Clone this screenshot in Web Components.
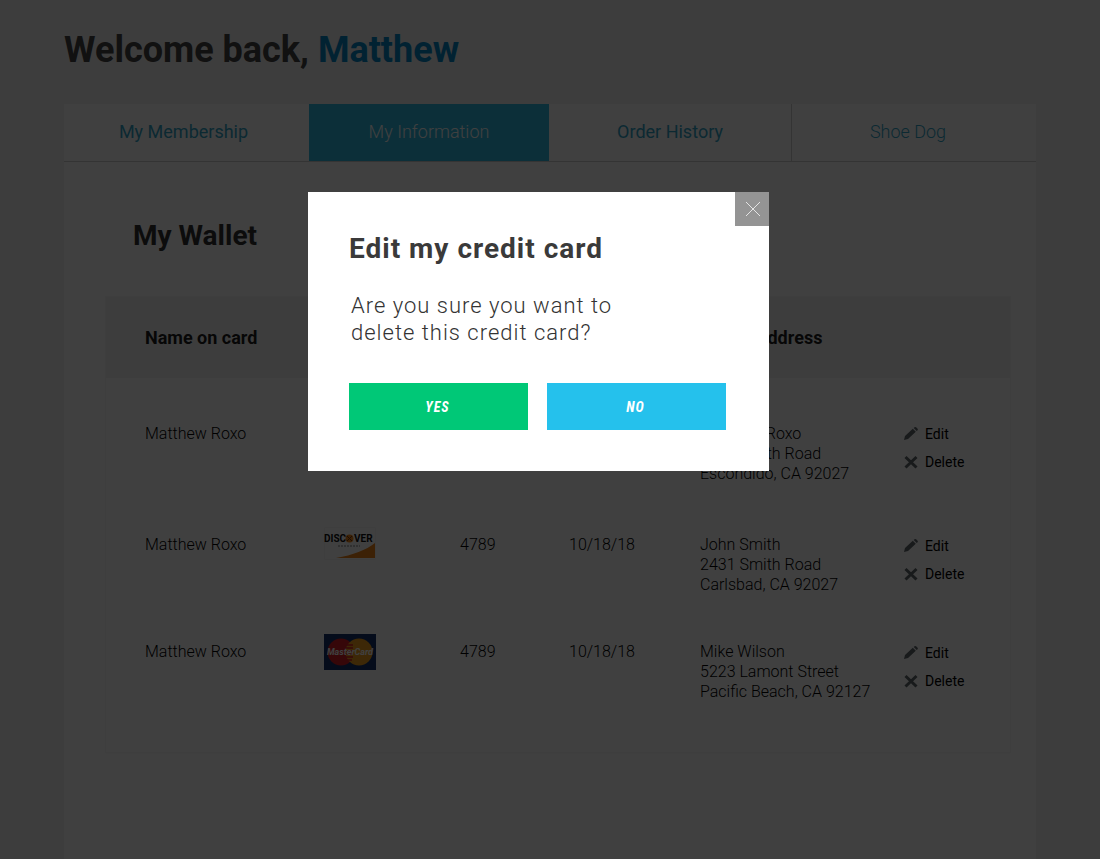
<!DOCTYPE html>
<html lang="en">
<head>
<meta charset="utf-8">
<meta name="viewport" content="width=device-width, initial-scale=1">
<title>My Wallet</title>
<style>
  body { margin: 0; background: #f3f3f3; color: #333; font-family: Roboto, "Liberation Sans", sans-serif; }
</style>
</head>
<body>
<account-page name="Matthew">
  <account-tabs slot="nav"></account-tabs>
  <wallet-panel></wallet-panel>
</account-page>
<confirm-dialog heading="Edit my credit card">Are you sure you want to delete this credit card?</confirm-dialog>

<script>
function define(name, html, setup) {
  const template = document.createElement('template');
  template.innerHTML = html;
  customElements.define(name, class extends HTMLElement {
    constructor() {
      super();
      this.attachShadow({ mode: 'open' }).append(template.content.cloneNode(true));
    }
    connectedCallback() { if (setup) setup(this, this.shadowRoot); }
  });
}

define('account-page', `
  <style>
    :host { display: flex; flex-direction: column; box-sizing: border-box; min-height: 100vh; padding: 0 64px; }
    h1 { margin: 0; padding: 28px 0 32px; font-size: 36px; line-height: 44px; font-weight: 700; color: #444; }
    span { color: #0588c8; }
    main { flex: 1; background: #fff; }
  </style>
  <h1>Welcome back, <span></span></h1>
  <slot name="nav"></slot>
  <main><slot></slot></main>
`, (host, root) => { root.querySelector('span').textContent = host.getAttribute('name'); });

define('account-tabs', `
  <style>
    :host { display: block; background: #fff; }
    nav { display: grid; grid-template-columns: 245fr 240fr 242fr 245fr; border-bottom: 1px solid #d0d0d0; }
    a { display: block; box-sizing: border-box; height: 57px; font-size: 18px; line-height: 56px; text-align: center; text-decoration: none; color: #30a5c8; }
    a:first-child { padding-right: 6px; }
    a:last-child { padding-right: 12px; border-left: 1px solid #d0d0d0; font-weight: 300; }
    a[aria-current] { background: #30bce4; color: #fff; font-weight: 300; }
  </style>
  <nav aria-label="Account">
    <a href="#membership">My Membership</a>
    <a href="#information" aria-current="page">My Information</a>
    <a href="#orders">Order History</a>
    <a href="#shoe-dog">Shoe Dog</a>
  </nav>
`);

define('wallet-icon', `
  <style>
    :host { display: block; width: 14px; height: 14px; }
    svg { display: block; }
  </style>
  <svg width="14" height="14" viewBox="0 0 14 14" fill="none" aria-hidden="true"></svg>
`, (host, root) => {
  const shapes = {
    edit: '<path fill="#60686c" d="M0 13l1-4 7.800-7.300 3 3L4 12zM9.700 1l.8-.7q.8-.6 1.600 0l1.500 1.400q.6.8 0 1.500l-.9.9z"/>',
    remove: '<path stroke="#60686c" stroke-width="3" d="M1.500 2l11 10.500M12.500 2l-11 10.500"/>'
  };
  root.querySelector('svg').innerHTML = shapes[host.getAttribute('shape')];
});

define('row-actions', `
  <style>
    :host { display: block; }
    a { display: flex; align-items: center; gap: 7px; height: 28px; font-size: 14px; font-weight: 400; color: #000; text-decoration: none; }
  </style>
  <a href="#edit"><wallet-icon shape="edit"></wallet-icon>Edit</a>
  <a href="#delete"><wallet-icon shape="remove"></wallet-icon>Delete</a>
`);

define('card-logo', `
  <style>
    :host { display: block; }
    svg { display: block; }
  </style>
  <svg width="52" height="36" viewBox="0 0 52 36" role="img"></svg>
`, (host, root) => {
  const art = {
    Discover: `
      <path fill="#fff" stroke="#f6f6f6" d="M.5.5h51v32H.5z"/>
      <path fill="#f08418" d="M12 31C29 28 42 23 51 16v15z"/>
      <text x="0" y="15" font-size="10" font-weight="700" fill="#111">DISC</text>
      <circle cx="25.500" cy="11.500" r="4" fill="#f08418"/>
      <path stroke="#7a3a10" d="M23 9l5 5M28 9l-5 5"/>
      <text x="30" y="15" font-size="10" font-weight="700" fill="#111">VER</text>
      <path stroke="#aaa" stroke-width="1.500" stroke-dasharray="2 1" d="M14 19h22"/>`,
    MasterCard: `
      <path fill="#15316b" d="M0 0h52v36H0z"/>
      <circle cx="17" cy="18" r="13.500" fill="#d81e24"/>
      <circle cx="35" cy="18" r="13.500" fill="#f3a11d"/>
      <path stroke="#d81e24" stroke-width="1.500" d="M22 11h7M21 14h8M21 17h8M21 20h8M22 23h7M23 26h5"/>
      <text x="26" y="21" font-size="9" font-style="italic" font-weight="700" fill="#fff" text-anchor="middle">MasterCard</text>`
  };
  const brand = host.getAttribute('brand');
  const svg = root.querySelector('svg');
  svg.setAttribute('aria-label', brand);
  svg.innerHTML = art[brand];
});

define('wallet-panel', `
  <style>
    :host { display: block; padding: 56px 26px 40px 42px; }
    h2 { margin: 0; padding: 0 27px 43px; font-size: 28px; line-height: 36px; font-weight: 700; color: #333; }
    table { width: 100%; table-layout: fixed; border-collapse: separate; border-spacing: 0; box-shadow: 0 0 0 1px #f8f8f8, 0 1px 2px #eee; font-size: 16px; line-height: 20px; font-weight: 300; color: #000; }
    .name { width: 218px; } .card { width: 136px; } .number { width: 109px; } .expires { width: 131px; } .address { width: 204px; }
    th, td { padding: 0; text-align: left; vertical-align: top; }
    th { height: 81px; background: #f4f4f4; font-size: 18px; font-weight: 700; vertical-align: middle; color: #1c1c1c; }
    td { height: 61px; padding-top: 46px; }
    tr > :first-child { padding-left: 39px; }
    tbody tr:first-child td { height: 65px; }
    tbody tr:last-child td { height: 66px; padding-bottom: 44px; }
    tbody td.act { padding-top: 43px; }
    tbody tr:first-child td.act { padding-top: 42px; }
    tbody td.logo { padding-top: 38px; }
  </style>
  <h2>My Wallet</h2>
  <table>
    <colgroup><col class="name"><col class="card"><col class="number"><col class="expires"><col class="address"><col></colgroup>
    <thead>
      <tr><th scope="col">Name on card</th><th></th><th></th><th></th><th scope="col">Billing Address</th><th></th></tr>
    </thead>
    <tbody>
      <tr><td>Matthew Roxo</td><td></td><td></td><td></td><td>Matthew Roxo<br>2431 Smith Road<br>Escondido, CA 92027</td><td class="act"><row-actions></row-actions></td></tr>
      <tr><td>Matthew Roxo</td><td class="logo"><card-logo brand="Discover"></card-logo></td><td>4789</td><td>10/18/18</td><td>John Smith<br>2431 Smith Road<br>Carlsbad, CA 92027</td><td class="act"><row-actions></row-actions></td></tr>
      <tr><td>Matthew Roxo</td><td class="logo"><card-logo brand="MasterCard"></card-logo></td><td>4789</td><td>10/18/18</td><td>Mike Wilson<br>5223 Lamont Street<br>Pacific Beach, CA 92127</td><td class="act"><row-actions></row-actions></td></tr>
    </tbody>
  </table>
`);

define('confirm-dialog', `
  <style>
    :host { position: fixed; inset: 0; display: flex; justify-content: center; align-items: flex-start; box-sizing: border-box; padding: 192px 23px 0 0; background: rgba(0, 0, 0, .75); }
    section { position: relative; box-sizing: border-box; width: 461px; padding: 39px 43px 41px 41px; background: #fff; }
    h2 { margin: 0 0 25px; font-size: 28px; line-height: 36px; font-weight: 700; letter-spacing: 1px; color: #3a3a3a; }
    p { margin: 0 0 37px; max-width: 290px; padding-left: 2px; font-size: 22px; line-height: 27px; font-weight: 300; letter-spacing: 1px; color: #333; }
    .choices { display: grid; grid-template-columns: 1fr 1fr; gap: 19px; }
    button { border: 0; padding: 0; color: #fff; font-family: "Roboto Condensed", Roboto, sans-serif; }
    .choices button { height: 47px; padding: 0 2px 0 0; font-size: 14px; font-style: italic; font-weight: 700; letter-spacing: 1px; }
    .yes { background: #00c877; }
    .no { background: #25c1ec; }
    .close { position: absolute; top: 0; right: 0; display: grid; place-items: center; width: 34px; height: 34px; padding: 0 0 0 2px; background: #949494; }
  </style>
  <section role="dialog" aria-modal="true" aria-labelledby="title">
    <button class="close" type="button" aria-label="Close">
      <svg width="16" height="16" viewBox="0 0 16 16" stroke="#e4e4e4" aria-hidden="true"><path d="M1 1l14 14M15 1L1 15"/></svg>
    </button>
    <h2 id="title"></h2>
    <p><slot></slot></p>
    <div class="choices">
      <button class="yes" type="button">YES</button>
      <button class="no" type="button">NO</button>
    </div>
  </section>
`, (host, root) => {
  root.querySelector('h2').textContent = host.getAttribute('heading');
  root.querySelectorAll('button').forEach(b => b.addEventListener('click', () => host.remove()));
});
</script>
</body>
</html>
